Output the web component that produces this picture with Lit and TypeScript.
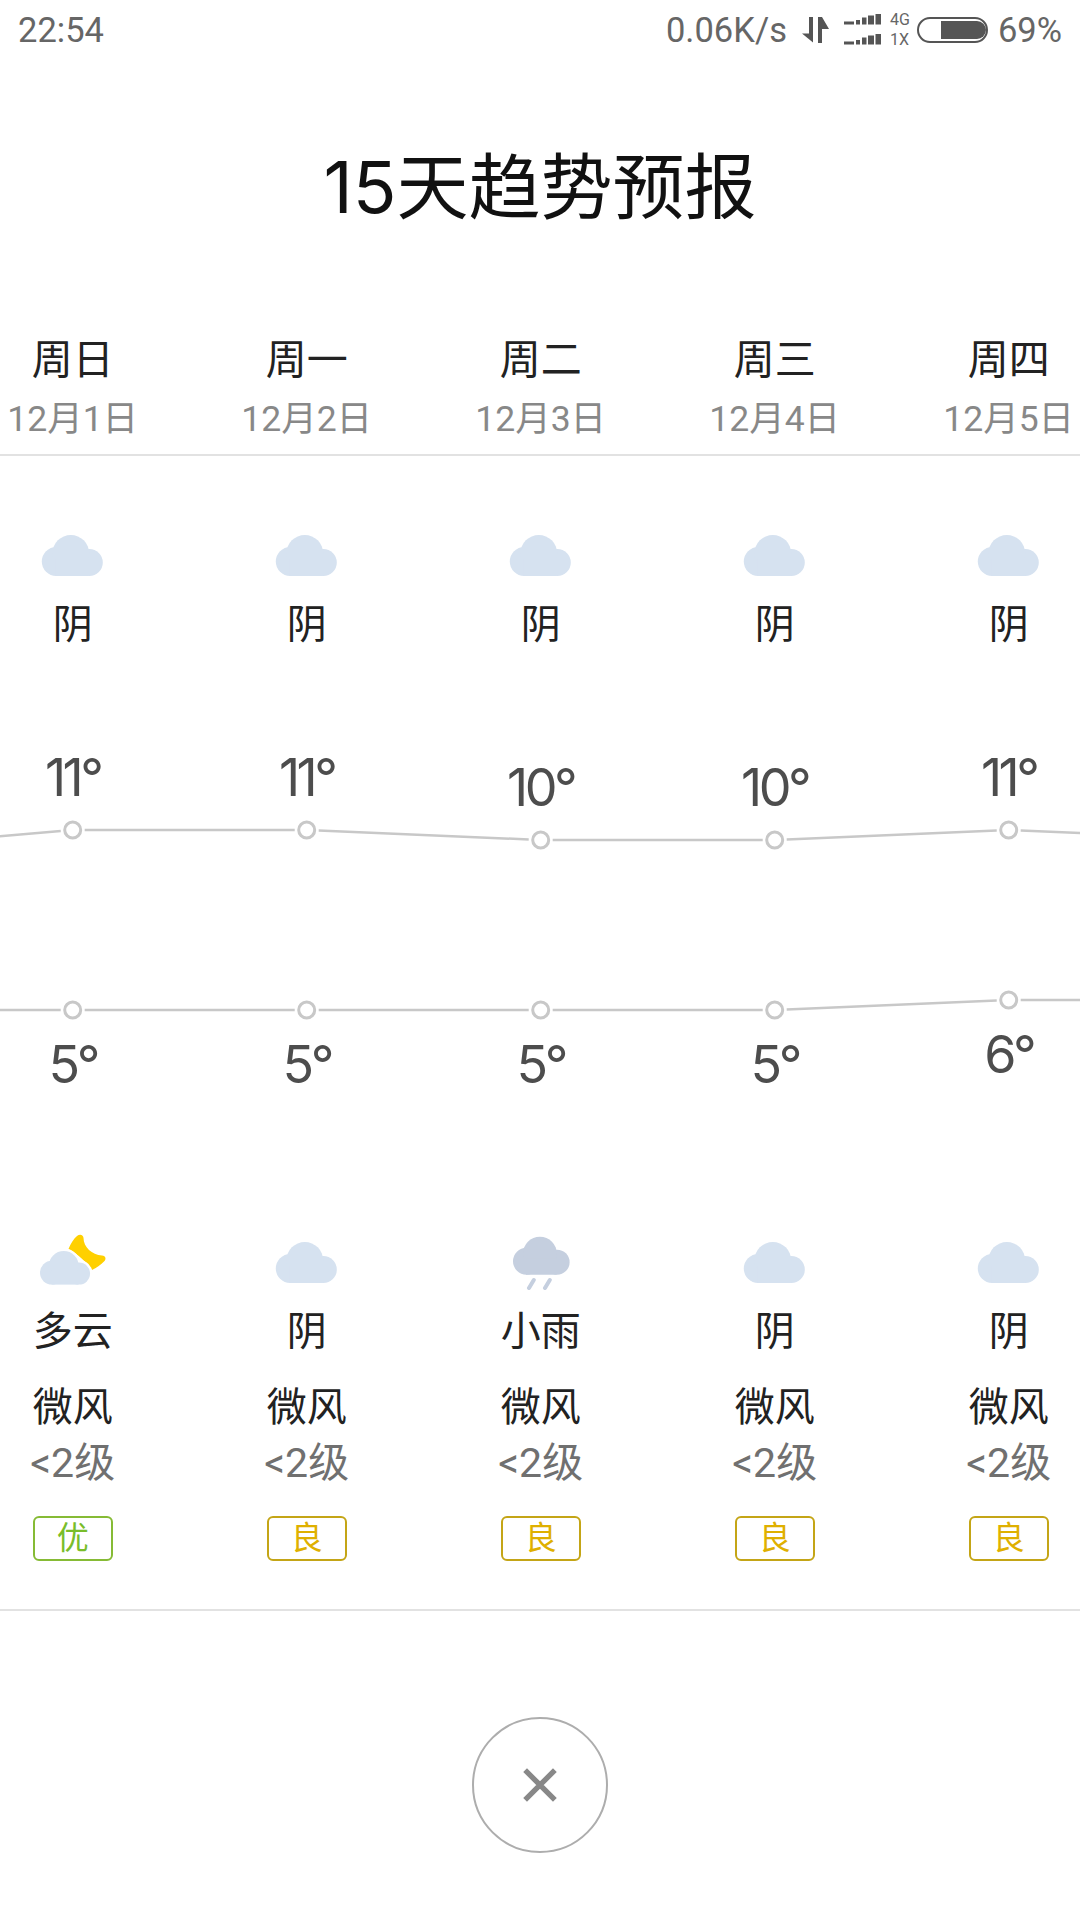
import { LitElement, css, html, svg } from 'lit';
import { customElement } from 'lit/decorators.js';

const COL = 234;
const FIRST_X = 72.7;
const CHART_TOP = 667;

const days = [
  { week: '周日', date: '12月1日', high: 11, low: 5, night: 'moon', text: '多云', aqi: '优', good: true },
  { week: '周一', date: '12月2日', high: 11, low: 5, night: 'cloud', text: '阴', aqi: '良', good: false },
  { week: '周二', date: '12月3日', high: 10, low: 5, night: 'rain', text: '小雨', aqi: '良', good: false },
  { week: '周三', date: '12月4日', high: 10, low: 5, night: 'cloud', text: '阴', aqi: '良', good: false },
  { week: '周四', date: '12月5日', high: 11, low: 6, night: 'cloud', text: '阴', aqi: '良', good: false },
];

// neighbours just off screen, only their line ends show
const highs = [9, ...days.map((d) => d.high), 10];
const lows = [5, ...days.map((d) => d.low), 6];

const highY = (t: number) => 830 + (11 - t) * 10 - CHART_TOP;
const lowY = (t: number) => 1010 + (5 - t) * 10 - CHART_TOP;

const cloudShape = svg`
  <circle cx="14.5" cy="26.5" r="14.5"></circle>
  <circle cx="47.5" cy="27.5" r="13.5"></circle>
  <circle cx="29" cy="18.3" r="18.3"></circle>
  <rect x="14" y="24" width="33" height="17"></rect>`;

function icon(kind: string) {
  if (kind === 'moon') {
    return html`<svg class="icon" viewBox="0 0 80 60">
      <path fill="#ffd000" d="M44 6C47 3.500 50.500 5 50.500 8C50.500 17 59 25 69 25.500C73 25.700 73.500 29.500 71 31.500C67.500 35 63.500 38 59 40C54 33 45 24 35.500 19C37.500 14 40.500 9 44 6Z"></path>
      <g transform="translate(7 21) scale(.82)" fill="#fff" stroke="#fff" stroke-width="6">${cloudShape}</g>
      <g transform="translate(7 21) scale(.82)" fill="#d6e2f0">${cloudShape}</g>
    </svg>`;
  }
  if (kind === 'rain') {
    return html`<svg class="icon" viewBox="0 0 80 60">
      <g transform="translate(12 6.7) scale(.928)" fill="#c5cfdf">${cloudShape}</g>
      <path d="M32.8 50L28 58M48.8 50L44 58" stroke="#c5cfdf" stroke-width="4" stroke-linecap="round" fill="none"></path>
    </svg>`;
  }
  return html`<svg class="icon" viewBox="0 0 80 60">
    <g transform="translate(8.8 12)" fill="#d6e2f0">${cloudShape}</g>
  </svg>`;
}

// line pieces stop short of the dots, as in the original chart
function segments(vals: number[], toY: (t: number) => number) {
  const gap = 12;
  return vals.slice(0, -1).map((v, i) => {
    const x1 = FIRST_X + (i - 1) * COL;
    const x2 = x1 + COL;
    const y1 = toY(v);
    const y2 = toY(vals[i + 1]);
    const len = Math.hypot(x2 - x1, y2 - y1);
    const dx = ((x2 - x1) / len) * gap;
    const dy = ((y2 - y1) / len) * gap;
    return svg`<line x1=${x1 + dx} y1=${y1 + dy} x2=${x2 - dx} y2=${y2 - dy}></line>`;
  });
}

@customElement('app-root')
export class AppRoot extends LitElement {
  static styles = css`
    :host {
      display: block;
      width: 1080px;
      height: 1920px;
      overflow: hidden;
      background: #fff;
      font-family: Roboto, 'Noto Sans CJK SC', sans-serif;
      font-weight: 400;
      color: #222;
    }

    .status {
      height: 60px;
      padding: 0 18px;
      display: flex;
      align-items: center;
      justify-content: space-between;
      font-size: 34.5px;
      color: #666;
    }
    .status-right {
      display: flex;
      align-items: center;
    }
    .arrows {
      width: 27px;
      height: 26px;
      margin-left: 15px;
    }
    .signal {
      width: 37px;
      height: 32px;
      margin-left: 15px;
    }
    .net {
      width: 22px;
      margin-left: 9px;
      font-size: 16px;
      line-height: 20px;
    }
    .battery {
      width: 72px;
      height: 26px;
      margin-left: 5px;
    }
    .pct {
      margin-left: 9px;
    }

    .title {
      height: 242px;
      padding-bottom: 6px;
      display: flex;
      align-items: center;
      justify-content: center;
      font-family: Inter, 'Noto Sans CJK SC', sans-serif;
      font-size: 72px;
      color: #111;
    }

    .track {
      display: grid;
      grid-template-columns: repeat(5, 234px);
      width: 1170px;
      margin-left: -44.3px;
      text-align: center;
    }

    .head {
      height: 146px;
      border-bottom: 2px solid #e2e2e2;
    }
    .week {
      font-size: 41px;
      line-height: 56px;
      margin-top: 24px;
    }
    .date {
      font-size: 35.5px;
      line-height: 50px;
      margin-top: 6px;
      color: #888;
    }

    .day {
      padding-top: 67px;
    }
    .icon {
      display: block;
      width: 80px;
      height: 60px;
      margin: 0 auto;
    }
    .cond {
      font-size: 40px;
      line-height: 84px;
    }

    .chart {
      display: block;
      width: 1080px;
      height: 563px;
    }
    .chart line {
      stroke: #c8c8c8;
      stroke-width: 2.5;
    }
    .chart circle {
      fill: #fff;
      stroke: #c8c8c8;
      stroke-width: 3;
    }
    .chart text {
      font-family: Inter, sans-serif;
      font-size: 52px;
      letter-spacing: -3.5px;
      fill: #4d4d4d;
      text-anchor: middle;
    }

    .wind {
      font-size: 40px;
      line-height: 56px;
      margin-top: 6px;
    }
    .level {
      font-size: 41px;
      line-height: 54px;
      color: #707070;
    }
    .aqi {
      box-sizing: border-box;
      width: 80px;
      height: 45px;
      margin: 26px auto 0;
      border: 2px solid;
      border-radius: 6px;
      font-size: 32px;
      line-height: 41px;
    }
    .aqi.good {
      border-color: #86bb35;
      color: #79bd2a;
    }
    .aqi.fair {
      border-color: #c4a516;
      color: #dfb000;
    }

    .night {
      height: 379px;
      border-bottom: 2px solid #e2e2e2;
    }

    .close {
      box-sizing: border-box;
      width: 136px;
      height: 136px;
      margin: 106px auto 0;
      border: 2px solid #adadad;
      border-radius: 50%;
      display: flex;
      align-items: center;
      justify-content: center;
    }
    .close svg {
      width: 34px;
      height: 34px;
    }
  `;

  render() {
    return html`
      <div class="status">
        <span>22:54</span>
        <div class="status-right">
          <span>0.06K/s</span>
          <svg class="arrows" viewBox="0 0 27 26" fill="#555">
            <path d="M7 0h4v25.500L0 16.500h7Z"></path>
            <path d="M16 0h4l7 12h-7v14h-4Z"></path>
          </svg>
          <svg class="signal" viewBox="0 0 37 32" fill="#555">
            <rect x="0" y="7.500" width="10" height="3"></rect>
            <rect x="12" y="6" width="4" height="4.500"></rect>
            <rect x="18" y="3.500" width="4.500" height="7"></rect>
            <rect x="24" y="1.500" width="6" height="9"></rect>
            <rect x="31.500" y="0" width="5.500" height="10.500"></rect>
            <rect x="0" y="27.500" width="10" height="3"></rect>
            <rect x="12" y="26" width="4" height="4.500"></rect>
            <rect x="18" y="23.500" width="4.500" height="7"></rect>
            <rect x="24" y="21.500" width="6" height="9"></rect>
            <rect x="31.500" y="20" width="5.500" height="10.500"></rect>
          </svg>
          <div class="net">4G<br />1X</div>
          <svg class="battery" viewBox="0 0 72 26">
            <rect x="1" y="1" width="69" height="24" rx="12" fill="none" stroke="#555" stroke-width="2"></rect>
            <path fill="#555" d="M24 4h36a9 9 0 0 1 0 18H24Z"></path>
          </svg>
          <span class="pct">69%</span>
        </div>
      </div>

      <div class="title">15天趋势预报</div>

      <div class="head">
        <div class="track">
          ${days.map(
            (d) => html`<div>
              <div class="week">${d.week}</div>
              <div class="date">${d.date}</div>
            </div>`,
          )}
        </div>
      </div>

      <div class="track">
        ${days.map(
          () => html`<div class="day">
            ${icon('cloud')}
            <div class="cond">阴</div>
          </div>`,
        )}
      </div>

      <svg class="chart" viewBox="0 0 1080 563">
        ${segments(highs, highY)} ${segments(lows, lowY)}
        ${days.map((d, i) => {
          const x = FIRST_X + i * COL;
          return svg`
            <circle cx=${x} cy=${highY(d.high)} r="8"></circle>
            <circle cx=${x} cy=${lowY(d.low)} r="8"></circle>
            <text x=${x} y=${highY(d.high) - 34}>${d.high}°</text>
            <text x=${x} y=${lowY(d.low) + 73}>${d.low}°</text>`;
        })}
      </svg>

      <div class="night">
        <div class="track">
          ${days.map(
            (d) => html`<div>
              ${icon(d.night)}
              <div class="cond">${d.text}</div>
              <div class="wind">微风</div>
              <div class="level">&lt;2级</div>
              <div class="aqi ${d.good ? 'good' : 'fair'}">${d.aqi}</div>
            </div>`,
          )}
        </div>
      </div>

      <div class="close">
        <svg viewBox="0 0 32 32">
          <path d="M2 2L30 30M30 2L2 30" stroke="#888" stroke-width="5" fill="none"></path>
        </svg>
      </div>
    `;
  }
}
